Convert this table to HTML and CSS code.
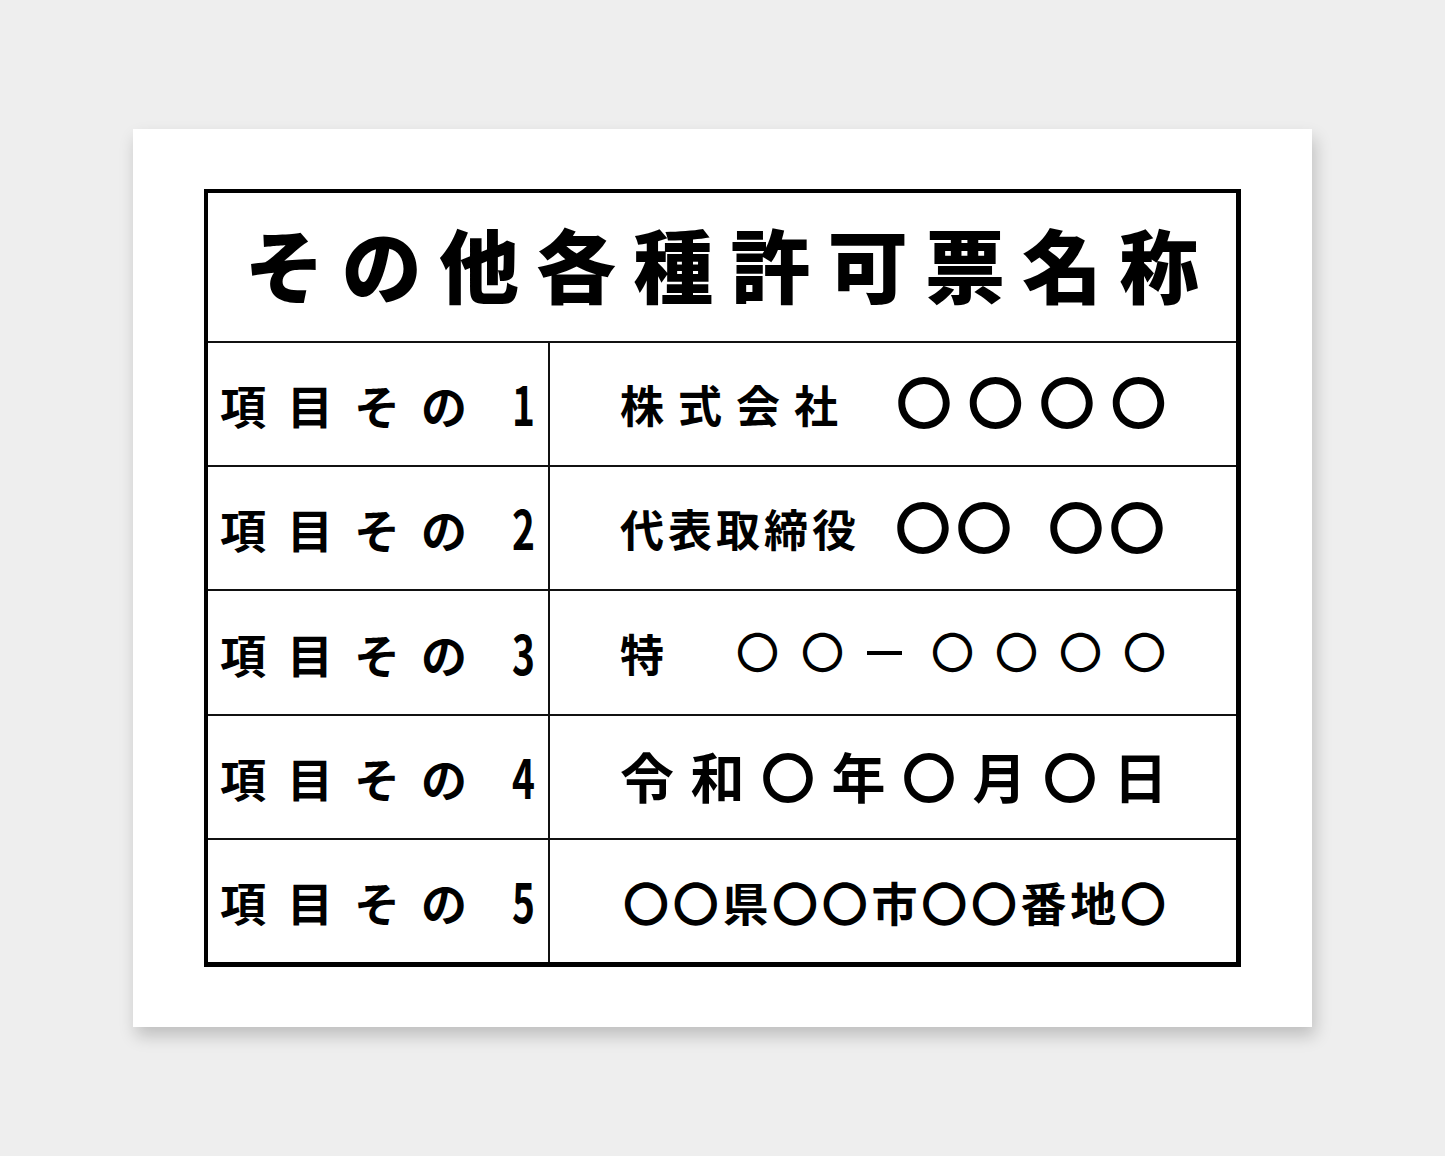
FILE: index.html
```html
<!DOCTYPE html>
<html lang="ja">
<head>
<meta charset="utf-8">
<title>その他各種許可票名称</title>
<link rel="stylesheet" href="styles.css">
</head>
<body>
<div class="card">
  <div class="sign">
    <div class="title"><span class="title-text">その他各種許可票名称</span></div>
    <div class="row">
      <div class="label"><span class="lk">項目その</span><span class="num">1</span></div>
      <div class="val"><span class="k k1">株式会社</span><span class="c c1">〇〇〇〇</span></div>
    </div>
    <div class="row">
      <div class="label"><span class="lk">項目その</span><span class="num">2</span></div>
      <div class="val"><span class="k k2">代表取締役</span><span class="c c2">〇〇</span><span class="c c2 c2b">〇〇</span></div>
    </div>
    <div class="row">
      <div class="label"><span class="lk">項目その</span><span class="num">3</span></div>
      <div class="val"><span class="k k3">特</span><span class="c3 c3a">〇〇</span><span class="dash"></span><span class="c3">〇〇〇〇</span></div>
    </div>
    <div class="row">
      <div class="label"><span class="lk">項目その</span><span class="num">4</span></div>
      <div class="val"><span class="k k4">令和〇年〇月〇日</span></div>
    </div>
    <div class="row">
      <div class="label"><span class="lk">項目その</span><span class="num">5</span></div>
      <div class="val"><span class="k k5">〇〇県〇〇市〇〇番地〇</span></div>
    </div>
  </div>
</div>
</body>
</html>
```
FILE: styles.css
```css
html, body {
  margin: 0;
  padding: 0;
}
body {
  background: #eeeeee;
  width: 1445px;
  height: 1156px;
  overflow: hidden;
  font-family: "Noto Sans CJK JP", "Noto Sans", sans-serif;
  color: #000;
}
.card {
  margin: 129px 0 0 133px;
  width: 1179px;
  height: 898px;
  box-sizing: border-box;
  padding: 60px 71px;
  background: #fff;
  box-shadow: 3px 9px 16px rgba(0, 0, 0, 0.2);
}
.sign {
  height: 100%;
  box-sizing: border-box;
  border-style: solid;
  border-color: #000;
  border-width: 4px 5px 5px 4px;
  display: flex;
  flex-direction: column;
}
.title {
  height: 148px;
  box-sizing: border-box;
  padding-bottom: 10px;
  display: flex;
  align-items: center;
  justify-content: center;
}
.title-text {
  font-size: 80px;
  font-weight: 900;
  letter-spacing: 17.2px;
  margin-right: -17px;
  line-height: 1;
}
.row {
  flex: 1;
  display: flex;
  border-top: 2px solid #111;
}
.label {
  width: 342px;
  box-sizing: border-box;
  border-right: 2px solid #111;
  display: flex;
  align-items: center;
  justify-content: space-between;
  padding: 0 13px 0 12px;
}
.lk {
  font-size: 46px;
  font-weight: 700;
  letter-spacing: 21px;
  line-height: 1;
}
.num {
  display: inline-block;
  font-size: 54px;
  font-weight: 700;
  line-height: 1;
  transform: scaleX(0.72);
  transform-origin: right center;
  margin-bottom: 2px;
}
.val {
  flex: 1;
  display: flex;
  align-items: center;
  padding-left: 70px;
  line-height: 1;
  font-weight: 700;
}
.k {
  font-size: 44px;
}
.k1 {
  letter-spacing: 14px;
}
.k2 {
  letter-spacing: 4px;
}
.c {
  font-size: 56px;
  font-weight: 700;
  margin-bottom: 8px;
}
.c1 {
  letter-spacing: 15.5px;
  margin-left: 44px;
}
.c2 {
  letter-spacing: 5px;
  margin-left: 35px;
  margin-bottom: 6px;
}
.c2b {
  margin-left: 31px;
}
.c3 {
  font-size: 43px;
  font-weight: 500;
  letter-spacing: 21px;
  margin-bottom: 4px;
}
.c3a {
  margin-left: 72px;
  letter-spacing: 22px;
}
.dash {
  display: inline-block;
  width: 35px;
  height: 4px;
  background: #000;
  margin: 0 29px 0 1px;
}
.k4 {
  font-size: 54px;
  letter-spacing: 16.5px;
  margin-bottom: 2px;
}
.k5 {
  font-size: 46px;
  letter-spacing: 3.7px;
  margin-left: 3px;
}
```
